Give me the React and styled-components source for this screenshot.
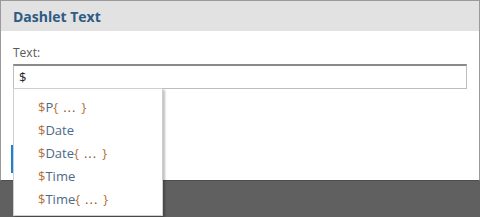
import React from "react";
import styled, { createGlobalStyle } from "styled-components";

const Global = createGlobalStyle`
  html, body {
    margin: 0;
    padding: 0;
    width: 480px;
    height: 217px;
    overflow: hidden;
    background: #606060;
    font-family: "Open Sans", "DejaVu Sans", sans-serif;
  }
`;

const Page = styled.div`
  width: 480px;
  height: 217px;
  background: #606060;
  position: relative;
`;

const Dialog = styled.div`
  width: 478px;
  height: 179px;
  background: #ffffff;
  border: 1px solid #9a9a9a;
  border-bottom: 1px solid #4e4e4e;
  display: flex;
  flex-direction: column;
`;

const Header = styled.div`
  height: 30px;
  background: #e2e2e2;
  display: flex;
  align-items: center;
  padding-left: 12px;
  font-size: 14px;
  font-weight: bold;
  color: #2d5b84;
`;

const Body = styled.div`
  padding: 14px 12px 0 12px;
  display: flex;
  flex-direction: column;
  position: relative;
  flex: 1;
`;

const Label = styled.label`
  font-size: 12px;
  color: #5a5a5a;
  line-height: 16px;
  margin-bottom: 3px;
`;

const Input = styled.div`
  height: 22px;
  border: 1px solid #bdbdbd;
  border-top: 2px solid #8a8a8a;
  display: flex;
  align-items: center;
  padding-left: 5px;
  font-size: 13px;
  color: #222;
`;

const Button = styled.div`
  width: 2px;
  height: 28px;
  background: #1b83d4;
  margin-top: 56px;
  margin-left: -2px;
`;

const Menu = styled.ul`
  position: absolute;
  left: 12px;
  top: 57px;
  width: 148px;
  margin: 0;
  padding: 7px 0 4px 0;
  list-style: none;
  background: #ffffff;
  border: 1px solid #cfcfcf;
  box-shadow: 2px 2px 2px rgba(0, 0, 0, 0.25);
`;

const Item = styled.li`
  height: 23px;
  line-height: 23px;
  padding-left: 24px;
  font-size: 13px;
  color: #4a6a88;
  white-space: pre;
`;

const Sym = styled.span`
  color: #b5713a;
`;

const Dots = styled.span`
  color: #8a5a30;
  padding: 0 5px;
  letter-spacing: 1px;
`;

const items = [
  { name: "P", args: true },
  { name: "Date", args: false },
  { name: "Date", args: true },
  { name: "Time", args: false },
  { name: "Time", args: true },
];

export default function App() {
  return (
    <Page>
      <Global />
      <Dialog>
        <Header>Dashlet Text</Header>
        <Body>
          <Label>Text:</Label>
          <Input>$</Input>
          <Button />
          <Menu>
            {items.map((it, i) => (
              <Item key={i}>
                <Sym>$</Sym>
                {it.name}
                {it.args && (
                  <>
                    <Sym>{"{"}</Sym>
                    <Dots>...</Dots>
                    <Sym>{"}"}</Sym>
                  </>
                )}
              </Item>
            ))}
          </Menu>
        </Body>
      </Dialog>
    </Page>
  );
}
